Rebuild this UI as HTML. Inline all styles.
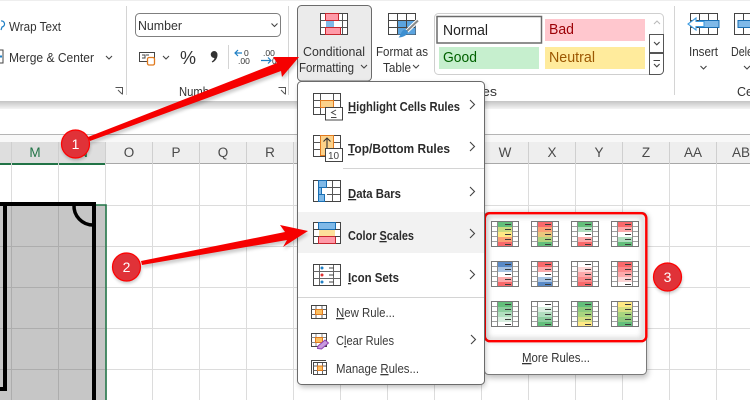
<!DOCTYPE html>
<html lang="en"><head><meta charset="utf-8"><title>Excel Conditional Formatting</title>
<style>
html,body{margin:0;padding:0;width:750px;height:400px;overflow:hidden;background:#fff}
svg{display:block;font-family:"Liberation Sans",sans-serif}
text{fill:#333;font-size:13px}
.b{font-weight:bold;fill:#2b2b2b}
.m{fill:#3a3a3a}
.h{font-size:13.5px;fill:#4a4a4a;text-anchor:middle}
.u{text-decoration:underline}
.c{fill:none;stroke:#444;stroke-width:1.1}
</style></head><body>
<svg width="750" height="400" viewBox="0 0 750 400" xmlns="http://www.w3.org/2000/svg">
<defs>
<filter id="bl" x="-20%" y="-20%" width="140%" height="140%"><feGaussianBlur stdDeviation="3"/></filter>
<filter id="bl2" x="-30%" y="-30%" width="160%" height="160%"><feGaussianBlur stdDeviation="1.6"/></filter>
<linearGradient id="sh" x1="0" y1="0" x2="0" y2="1"><stop offset="0" stop-color="#c4c4c4"/><stop offset="1" stop-color="#f4f4f4"/></linearGradient>
<g id="g">
<path d="M.5 5.500H6.500M21.500 5.500H27.500M.5 10.500H6.500M21.500 10.500H27.500M.5 15.500H6.500M21.500 15.500H27.500M.5 20.500H6.500M21.500 20.500H27.500" stroke="#a0a0a0" fill="none"/>
<path d="M6.500 1V25M21.500 1V25" stroke="#8a8a8a" fill="none"/>
<rect x=".5" y=".5" width="27" height="25" fill="none" stroke="#777"/>
<path d="M14 3.500H20M14 8.500H20M14 13.500H20M14 18.500H20M14 23.500H20" stroke="#3a3a3a" stroke-width="1" fill="none"/>
</g>
</defs>

<!-- sheet -->
<rect width="750" height="400" fill="#fff"/>
<rect x="0" y="0" width="750" height="1" fill="#eee"/>
<rect x="0" y="101" width="750" height="8" fill="url(#sh)"/>
<rect x="0" y="134" width="750" height="1" fill="#b5b5b5"/>
<rect x="0" y="135" width="750" height="7" fill="#f8f8f8"/>
<rect x="0" y="142" width="750" height="22" fill="#eeeeee"/>
<rect x="0" y="142" width="106" height="22" fill="#dedede"/>
<rect x="106" y="163" width="644" height="1" fill="#a8a8a8"/>
<rect x="0" y="163" width="106" height="2" fill="#217346"/>
<path d="M11.500 142V164M58.500 142V164M105.500 142V164M152.500 142V164M199.500 142V164M246.500 142V164M293.500 142V164M340.500 142V164M387.500 142V164M434.500 142V164M481.500 142V164M528.500 142V164M575.500 142V164M622.500 142V164M669.500 142V164M716.500 142V164" stroke="#cfcfcf" fill="none"/>
<path d="M11.500 164V400M58.500 164V400M105.500 164V400M152.500 164V400M199.500 164V400M246.500 164V400M293.500 164V400M340.500 164V400M387.500 164V400M434.500 164V400M481.500 164V400M528.500 164V400M575.500 164V400M622.500 164V400M669.500 164V400M716.500 164V400M0 205.500H750M0 246.500H750M0 287.500H750M0 328.500H750M0 369.500H750" stroke="#dcdcdc" fill="none"/>
<text class="h" x="35" y="157" style="fill:#217346">M</text>
<text class="h" x="83" y="157" style="fill:#217346">N</text>
<text class="h" x="129" y="157">O</text><text class="h" x="176" y="157">P</text><text class="h" x="223" y="157">Q</text><text class="h" x="270" y="157">R</text>
<text class="h" x="505" y="157">W</text><text class="h" x="552" y="157">X</text><text class="h" x="599" y="157">Y</text><text class="h" x="646" y="157">Z</text><text class="h" x="693" y="157">AA</text><text class="h" x="741" y="157">AB</text>

<!-- selection and shape -->
<rect x="0" y="205" width="105" height="195" fill="#c6c6c6"/>
<path d="M11.500 205V400M58.500 205V400M0 246.500H105M0 287.500H105M0 328.500H105M0 369.500H105" stroke="#adadad" fill="none"/>
<path d="M0 205H106V400" fill="none" stroke="#217346" stroke-width="1.600"/>
<path d="M0 204H94V400" fill="none" stroke="#000" stroke-width="4"/>
<path d="M5 204V389H0" fill="none" stroke="#000" stroke-width="4"/>
<path d="M74 205A19 19 0 0 0 93 225" fill="none" stroke="#000" stroke-width="3.500"/>

<!-- ribbon -->
<rect x="0" y="1" width="750" height="100" fill="#fff"/>
<path d="M126.500 6V95M288.500 6V95M674.500 6V95M228.500 45V69" stroke="#d4d4d4" fill="none"/>
<path d="M1 21a3 3 0 1 1 1 6l-1 3" fill="none" stroke="#1f7fc4" stroke-width="1.200"/>
<text x="9" y="31" textLength="52" lengthAdjust="spacingAndGlyphs">Wrap Text</text>
<rect x="-4" y="50" width="7" height="13" fill="#fff" stroke="#444"/><path d="M0 56.500H2" stroke="#1f7fc4" stroke-width="2"/>
<text x="9" y="62" textLength="85" lengthAdjust="spacingAndGlyphs">Merge &amp; Center</text>
<path class="c" d="M106 56l3 3 3-3"/>
<path d="M115.500 87.500h7v7M118 90l4 4" fill="none" stroke="#555"/>
<rect x="135.500" y="13.500" width="145" height="23" rx="4" fill="#fff" stroke="#7f7f7f"/>
<text x="138" y="30" textLength="44" lengthAdjust="spacingAndGlyphs">Number</text>
<path class="c" d="M271.500 23.500l3 3 3-3"/>
<rect x="139.500" y="52.500" width="15" height="9" fill="#fff" stroke="#444"/>
<path d="M142 55h3v3h-3M146 55h3" fill="none" stroke="#444"/>
<rect x="147.500" y="57.500" width="7" height="7.500" rx="1.500" fill="#fff" stroke="#e07a1f" stroke-width="1.300"/>
<path class="c" d="M163 56l3 3 3-3"/>
<text x="180" y="64" style="font-size:18px" textLength="16" lengthAdjust="spacingAndGlyphs">%</text>
<path d="M214 51a3.500 3.500 0 0 1 3.500 4c0 3-2 6-5 7.500l-.8-1c1.500-1 2.500-2 2.800-3.500a3.500 3.500 0 0 1-.5-7z" fill="#333"/>
<path d="M235 53h7M238 50l-3 3 3 3" fill="none" stroke="#1f7fc4" stroke-width="1.200"/>
<text x="244" y="56" style="font-size:8.500px">0</text><text x="238" y="64" style="font-size:8.500px">.00</text>
<text x="263" y="56" style="font-size:8.500px">.00</text>
<path d="M261 60.500h10M268 57.500l3 3-3 3" fill="none" stroke="#1f7fc4" stroke-width="1.200"/>
<text x="272" y="64" style="font-size:8.500px">0</text>
<text x="179" y="96" textLength="30" lengthAdjust="spacingAndGlyphs" style="font-size:12.500px">Numb</text>
<path d="M278.500 87.500h7v7M281 90l4 4" fill="none" stroke="#555"/>

<!-- conditional formatting button -->
<rect x="297.500" y="5.500" width="74" height="75.500" rx="4" fill="#ebebeb" stroke="#6b6b6b"/>
<g transform="translate(320,13)">
<rect x=".5" y=".5" width="27" height="21" fill="#fff" stroke="#444"/>
<path d="M.5 7.500H27M.5 14.500H27M6.500 1V21M13.500 1V21M22.500 1V21" stroke="#555" fill="none"/>
<rect x="5.500" y=".5" width="13" height="7" fill="#ff9aa8" stroke="#c8262f"/>
<rect x="6" y="8" width="8" height="6" fill="#7fb9e8"/>
<rect x="5.500" y="14.500" width="15" height="7" fill="#ff9aa8" stroke="#c8262f"/>
</g>
<text x="303" y="56" textLength="62" lengthAdjust="spacingAndGlyphs">Conditional</text>
<text x="299" y="72" textLength="55" lengthAdjust="spacingAndGlyphs">Formatting</text>
<path class="c" d="M361 65l3 3 3-3"/>
<!-- format as table -->
<g transform="translate(388,13)">
<rect x=".5" y=".5" width="27" height="21" fill="#fff" stroke="#444"/>
<rect x="9.500" y="7.500" width="18" height="14" fill="#5ba4df"/>
<path d="M.5 7.500H27M.5 14.500H27M9.500 1V21M18.500 1V21" stroke="#444" fill="none"/>
<path d="M30 7.500L19 18" stroke="#fff" stroke-width="4"/>
<path d="M30 7.500L19 18" stroke="#8a8a8a" stroke-width="2"/>
<path d="M15.500 17c3-1 5 1 4 3-1 3-6 4.500-9 4.500 2.500-2 2-5.500 5-7.500z" fill="#3d8fd1"/>
</g>
<text x="376" y="56" textLength="52" lengthAdjust="spacingAndGlyphs">Format as</text>
<text x="383" y="72" textLength="28" lengthAdjust="spacingAndGlyphs">Table</text>
<path class="c" d="M413 65l3 3 3-3"/>

<!-- gallery -->
<rect x="434.500" y="13.500" width="229" height="61" rx="4" fill="#fff" stroke="#cfcfcf"/>
<rect x="437" y="16.500" width="104.500" height="26.500" fill="#fff" stroke="#6b6b6b" stroke-width="1.500"/>
<text x="443" y="35" style="font-size:14.500px;fill:#222" textLength="45" lengthAdjust="spacingAndGlyphs">Normal</text>
<rect x="439" y="47" width="100" height="22" fill="#c6efce"/>
<text x="443" y="62" style="font-size:14.500px;fill:#006100" textLength="34" lengthAdjust="spacingAndGlyphs">Good</text>
<rect x="545" y="19" width="100" height="22" fill="#ffc7ce"/>
<text x="549" y="34" style="font-size:14.500px;fill:#9c0006" textLength="25" lengthAdjust="spacingAndGlyphs">Bad</text>
<rect x="545" y="47" width="100" height="22" fill="#ffeb9c"/>
<text x="549" y="62" style="font-size:14.500px;fill:#9c5700" textLength="46" lengthAdjust="spacingAndGlyphs">Neutral</text>
<path d="M654 24l3-3 3 3" fill="none" stroke="#bbb" stroke-width="1.100"/>
<rect x="649.500" y="34.500" width="14" height="18" fill="#fff" stroke="#555"/>
<path class="c" d="M654 42l2.800 2.800 2.800-2.800"/>
<path d="M649.500 53.500h14v17a4 4 0 0 1-4 4h-10z" fill="#fff" stroke="#555"/>
<path d="M653.500 60.500h6.500" stroke="#444"/><path class="c" d="M654 64l2.800 2.800 2.800-2.800"/>
<text x="482" y="96" textLength="15" lengthAdjust="spacingAndGlyphs" style="font-size:12.500px">es</text>

<!-- insert / delete -->
<g transform="translate(690,13)">
<rect x=".5" y=".5" width="27" height="21" fill="#fff" stroke="#444"/>
<path d="M.5 7.500H9M.5 14.500H9M9.500 1V21M18.500 1V21" stroke="#444" fill="none"/>
<rect x="9" y="7.500" width="20" height="7" fill="#7fb9e8" stroke="#1a6fb3"/>
<path d="M14 8.500H6V5L-2 11L6 17V13.500H14Z" fill="#fff" stroke="#3d9be0" stroke-width="1.100"/>
</g>
<text x="689" y="56" textLength="29" lengthAdjust="spacingAndGlyphs">Insert</text>
<path class="c" d="M700.500 66l3 3 3-3"/>
<g transform="translate(734,13)">
<rect x=".5" y=".5" width="27" height="21" fill="#fff" stroke="#444"/>
<path d="M9.500 1V21" stroke="#444"/>
<rect x="4" y="7.500" width="22" height="7" fill="#7fb9e8" stroke="#1a6fb3"/>
</g>
<text x="731" y="56" textLength="22" lengthAdjust="spacingAndGlyphs">Dele</text>
<path class="c" d="M744 66l3 3 3-3"/>
<text x="737" y="96" style="font-size:12.500px">Ce</text>

<!-- submenu -->
<rect x="486" y="214" width="162" height="164" rx="4" fill="#000" opacity=".25" filter="url(#bl)"/>
<rect x="484.500" y="212.500" width="162" height="162" rx="4" fill="#fff" stroke="#7a7a7a"/>
<text x="522" y="362" textLength="68" lengthAdjust="spacingAndGlyphs"><tspan class="u">M</tspan>ore Rules...</text>

<!-- tiles -->
<rect x="486" y="215" width="158" height="125" rx="5" fill="none" stroke="#000" stroke-width="3" opacity=".25" filter="url(#bl)"/>
<g transform="translate(491,221)"><rect width="28" height="26" fill="#fff"/><rect x="6.500" width="15" y="1" height="5" fill="#63be7b"/><rect x="6.500" width="15" y="6" height="5" fill="#cbdc81"/><rect x="6.500" width="15" y="11" height="5" fill="#ffe984"/><rect x="6.500" width="15" y="16" height="5" fill="#fba276"/><rect x="6.500" width="15" y="21" height="4" fill="#f8696b"/><use href="#g"/></g>
<g transform="translate(531,221)"><rect width="28" height="26" fill="#fff"/><rect x="6.500" width="15" y="1" height="5" fill="#f8696b"/><rect x="6.500" width="15" y="6" height="5" fill="#fba276"/><rect x="6.500" width="15" y="11" height="5" fill="#ebc77d"/><rect x="6.500" width="15" y="16" height="5" fill="#b1d580"/><rect x="6.500" width="15" y="21" height="4" fill="#63be7b"/><use href="#g"/></g>
<g transform="translate(571,221)"><rect width="28" height="26" fill="#fff"/><rect x="6.500" width="15" y="1" height="5" fill="#63be7b"/><rect x="6.500" width="15" y="6" height="5" fill="#b1debf"/><rect x="6.500" width="15" y="11" height="5" fill="#fff"/><rect x="6.500" width="15" y="16" height="5" fill="#fcaaab"/><rect x="6.500" width="15" y="21" height="4" fill="#f8696b"/><use href="#g"/></g>
<g transform="translate(611,221)"><rect width="28" height="26" fill="#fff"/><rect x="6.500" width="15" y="1" height="5" fill="#f8696b"/><rect x="6.500" width="15" y="6" height="5" fill="#fcaaab"/><rect x="6.500" width="15" y="11" height="5" fill="#fff"/><rect x="6.500" width="15" y="16" height="5" fill="#b1debf"/><rect x="6.500" width="15" y="21" height="4" fill="#63be7b"/><use href="#g"/></g>
<g transform="translate(491,261)"><rect width="28" height="26" fill="#fff"/><rect x="6.500" width="15" y="1" height="5" fill="#5a8ac6"/><rect x="6.500" width="15" y="6" height="5" fill="#a9c4e3"/><rect x="6.500" width="15" y="11" height="5" fill="#fff"/><rect x="6.500" width="15" y="16" height="5" fill="#fcaaab"/><rect x="6.500" width="15" y="21" height="4" fill="#f8696b"/><use href="#g"/></g>
<g transform="translate(531,261)"><rect width="28" height="26" fill="#fff"/><rect x="6.500" width="15" y="1" height="5" fill="#f8696b"/><rect x="6.500" width="15" y="6" height="5" fill="#fcaaab"/><rect x="6.500" width="15" y="11" height="5" fill="#fff"/><rect x="6.500" width="15" y="16" height="5" fill="#a9c4e3"/><rect x="6.500" width="15" y="21" height="4" fill="#5a8ac6"/><use href="#g"/></g>
<g transform="translate(571,261)"><rect width="28" height="26" fill="#fff"/><rect x="6.500" width="15" y="1" height="5" fill="#fff"/><rect x="6.500" width="15" y="6" height="5" fill="#fcd5d5"/><rect x="6.500" width="15" y="11" height="5" fill="#fcaaab"/><rect x="6.500" width="15" y="16" height="5" fill="#fa8a8b"/><rect x="6.500" width="15" y="21" height="4" fill="#f8696b"/><use href="#g"/></g>
<g transform="translate(611,261)"><rect width="28" height="26" fill="#fff"/><rect x="6.500" width="15" y="1" height="5" fill="#f8696b"/><rect x="6.500" width="15" y="6" height="5" fill="#fa8a8b"/><rect x="6.500" width="15" y="11" height="5" fill="#fcaaab"/><rect x="6.500" width="15" y="16" height="5" fill="#fcd5d5"/><rect x="6.500" width="15" y="21" height="4" fill="#fff"/><use href="#g"/></g>
<g transform="translate(491,301)"><rect width="28" height="26" fill="#fff"/><rect x="6.500" width="15" y="1" height="5" fill="#63be7b"/><rect x="6.500" width="15" y="6" height="5" fill="#8dce9f"/><rect x="6.500" width="15" y="11" height="5" fill="#b1debf"/><rect x="6.500" width="15" y="16" height="5" fill="#d8eedf"/><rect x="6.500" width="15" y="21" height="4" fill="#fff"/><use href="#g"/></g>
<g transform="translate(531,301)"><rect width="28" height="26" fill="#fff"/><rect x="6.500" width="15" y="1" height="5" fill="#fff"/><rect x="6.500" width="15" y="6" height="5" fill="#d8eedf"/><rect x="6.500" width="15" y="11" height="5" fill="#b1debf"/><rect x="6.500" width="15" y="16" height="5" fill="#8dce9f"/><rect x="6.500" width="15" y="21" height="4" fill="#63be7b"/><use href="#g"/></g>
<g transform="translate(571,301)"><rect width="28" height="26" fill="#fff"/><rect x="6.500" width="15" y="1" height="5" fill="#63be7b"/><rect x="6.500" width="15" y="6" height="5" fill="#8fcb7e"/><rect x="6.500" width="15" y="11" height="5" fill="#a9d57f"/><rect x="6.500" width="15" y="16" height="5" fill="#d5e083"/><rect x="6.500" width="15" y="21" height="4" fill="#ffe984"/><use href="#g"/></g>
<g transform="translate(611,301)"><rect width="28" height="26" fill="#fff"/><rect x="6.500" width="15" y="1" height="5" fill="#ffe984"/><rect x="6.500" width="15" y="6" height="5" fill="#d5e083"/><rect x="6.500" width="15" y="11" height="5" fill="#a9d57f"/><rect x="6.500" width="15" y="16" height="5" fill="#8fcb7e"/><rect x="6.500" width="15" y="21" height="4" fill="#63be7b"/><use href="#g"/></g>
<rect x="484.800" y="213.200" width="161.500" height="128" rx="5" fill="none" stroke="#f00" stroke-width="2.400"/>

<!-- main menu -->
<rect x="299" y="84" width="186" height="303" rx="4" fill="#000" opacity=".28" filter="url(#bl)"/>
<rect x="297.500" y="81.500" width="187" height="303" rx="4" fill="#fff" stroke="#6b6b6b"/>
<rect x="298" y="212" width="186" height="41" fill="#f2f2f2"/>
<path d="M343 168.500H484M298 297.500H484" stroke="#d4d4d4" fill="none"/>

<!-- highlight icon -->
<g transform="translate(313,93)">
<rect x=".5" y=".5" width="27" height="21" fill="#fff" stroke="#444"/>
<path d="M.5 7.500H27M.5 14.500H27M7.500 1V21M20.500 1V21" stroke="#555" fill="none"/>
<rect x="7.500" y="7.500" width="13" height="7" fill="#fcd28a" stroke="#e07a1f"/>
<rect x="12.500" y="14.500" width="17" height="12.500" fill="#fff" stroke="#444"/>
<path d="M23 17l-4.500 2.500 4.500 2.500M18 24.500h5.500" fill="none" stroke="#444"/>
</g>
<text class="b" x="348" y="111" textLength="112" lengthAdjust="spacingAndGlyphs"><tspan class="u">H</tspan>ighlight Cells Rules</text>
<path class="c" d="M470 100l4.500 4.500-4.500 4.500"/>
<!-- top bottom icon -->
<g transform="translate(313,135)">
<rect x=".5" y=".5" width="27" height="21" fill="#fff" stroke="#444"/>
<path d="M.5 7.500H7M20 7.500H27M.5 14.500H7M20 14.500H27" stroke="#555"/>
<rect x="7.500" y=".5" width="13" height="20" fill="#fcd28a" stroke="#e07a1f"/>
<path d="M14 14V3M10.500 6.500L14 3l3.500 3.500" fill="none" stroke="#333" stroke-width="1.100"/>
<rect x="12.500" y="13.500" width="17" height="13" fill="#fff" stroke="#444"/>
<text x="15" y="24" style="font-size:10px;fill:#444">10</text>
</g>
<text class="b" x="348" y="153" textLength="102" lengthAdjust="spacingAndGlyphs"><tspan class="u">T</tspan>op/Bottom Rules</text>
<path class="c" d="M470 142l4.500 4.500-4.500 4.500"/>
<!-- data bars icon -->
<g transform="translate(313,180)">
<rect x=".5" y=".5" width="27" height="21" fill="#fff" stroke="#444"/>
<path d="M14 7.500H27M14 14.500H27M19.500 1V21M6.500 1V21" stroke="#555" fill="none"/>
<rect x="5.500" y=".5" width="8" height="7" fill="#7fb9e8" stroke="#1a6fb3"/>
<rect x="5.500" y="7.500" width="3" height="7" fill="#7fb9e8" stroke="#1a6fb3"/>
<rect x="5.500" y="14.500" width="6" height="7" fill="#7fb9e8" stroke="#1a6fb3"/>
</g>
<text class="b" x="348" y="198" textLength="53" lengthAdjust="spacingAndGlyphs"><tspan class="u">D</tspan>ata Bars</text>
<path class="c" d="M470 187l4.500 4.500-4.500 4.500"/>
<!-- color scales icon -->
<g transform="translate(313,222)">
<rect x=".5" y=".5" width="27" height="21" fill="#fff" stroke="#444"/>
<rect x="5.500" y=".5" width="17" height="7" fill="#7fb9e8" stroke="#1a6fb3"/>
<rect x="6" y="8" width="16" height="6.500" fill="#fde09a"/>
<rect x="5.500" y="14.500" width="17" height="7" fill="#ff9aa8" stroke="#c8262f"/>
<path d="M.5 7.500H6M22 7.500H27M.5 14.500H6M22 14.500H27" stroke="#444"/>
</g>
<text class="b" x="348" y="240" textLength="66" lengthAdjust="spacingAndGlyphs">Color <tspan class="u">S</tspan>cales</text>
<path class="c" d="M470 229l4.500 4.500-4.500 4.500"/>
<!-- icon sets icon -->
<g transform="translate(313,264)">
<rect x=".5" y=".5" width="27" height="21" fill="#fff" stroke="#444"/>
<path d="M.5 7.500H27M.5 14.500H27M6.500 1V21M20.500 1V21" stroke="#666" fill="none"/>
<circle cx="9" cy="4" r="1.500" fill="#1f7fc4"/><circle cx="9" cy="11" r="1.500" fill="#e03030"/><circle cx="9" cy="18" r="1.500" fill="#1f7fc4"/>
<path d="M16 4H21M16 11H21M16 18H21" stroke="#444"/>
</g>
<text class="b" x="348" y="282" textLength="51" lengthAdjust="spacingAndGlyphs"><tspan class="u">I</tspan>con Sets</text>
<path class="c" d="M470 270l4.500 4.500-4.500 4.500"/>
<!-- new rule -->
<g transform="translate(311,305)">
<rect x=".5" y=".5" width="15" height="13" fill="#fff" stroke="#444"/>
<path d="M.5 4.500H15M.5 9.500H15M5 1V13M11 1V13" stroke="#666" fill="none"/>
<rect x="4.500" y="4.500" width="7" height="5" fill="#fcc060" stroke="#e07a1f"/>
</g>
<text class="m" x="336" y="317" textLength="59" lengthAdjust="spacingAndGlyphs"><tspan class="u">N</tspan>ew Rule...</text>
<!-- clear rules -->
<g transform="translate(311,333)">
<rect x=".5" y=".5" width="15" height="13" fill="#fff" stroke="#444"/>
<path d="M.5 4.500H15M.5 9.500H15M5 1V13M11 1V13" stroke="#888" fill="none"/>
<rect x="4.500" y="4.500" width="7" height="5" fill="#fcc060" stroke="#e07a1f"/>
<path d="M7 13l7-6 3.500 3-7 6-4-.5z" fill="#c79adf" stroke="#8f3fb0"/>
</g>
<text class="m" x="336" y="345" textLength="58" lengthAdjust="spacingAndGlyphs">C<tspan class="u">l</tspan>ear Rules</text>
<path class="c" d="M471 335l4.500 4.500-4.500 4.500"/>
<!-- manage rules -->
<g transform="translate(311,360)">
<path d="M.5 14V.5H15" fill="none" stroke="#444"/>
<rect x="2.500" y="2.500" width="13" height="12" fill="#fff" stroke="#444"/>
<path d="M2.500 6H15M2.500 10.500H15M6.500 3V14M11.500 3V14" stroke="#666" fill="none"/>
<rect x="6.500" y="6" width="5" height="4.500" fill="#fcc060" stroke="#e07a1f"/>
</g>
<text class="m" x="336" y="373" textLength="83" lengthAdjust="spacingAndGlyphs">Manage <tspan class="u">R</tspan>ules...</text>

<!-- arrows -->
<path d="M88 137L277 63L273 57L299 57L282 77L281 71L90 141Z" fill="#000" opacity=".2" filter="url(#bl2)" transform="translate(1,3)"/>
<path d="M88 137L277 63L273 57L299 57L282 77L281 71L90 141Z" fill="#f60000"/>
<path d="M141 261L285 232L280 225L308 231L283 247L287 240L142 265Z" fill="#000" opacity=".2" filter="url(#bl2)" transform="translate(1,3)"/>
<path d="M141 261L285 232L280 225L308 231L283 247L287 240L142 265Z" fill="#f60000"/>

<!-- badges -->
<circle cx="76" cy="146" r="14.500" fill="#000" opacity=".22" filter="url(#bl2)"/>
<circle cx="75.500" cy="144" r="14" fill="#e03238" stroke="#f00" stroke-width="1.200"/>
<text x="75.500" y="149" style="font-size:14px;fill:#fff;text-anchor:middle">1</text>
<circle cx="127" cy="269" r="14.500" fill="#000" opacity=".22" filter="url(#bl2)"/>
<circle cx="126.500" cy="267" r="14" fill="#e03238" stroke="#f00" stroke-width="1.200"/>
<text x="126.500" y="272" style="font-size:14px;fill:#fff;text-anchor:middle">2</text>
<circle cx="668" cy="279" r="14.500" fill="#000" opacity=".22" filter="url(#bl2)"/>
<circle cx="667.500" cy="277" r="14" fill="#e03238" stroke="#f00" stroke-width="1.200"/>
<text x="667.500" y="282" style="font-size:14px;fill:#fff;text-anchor:middle">3</text>
</svg>
</body></html>
